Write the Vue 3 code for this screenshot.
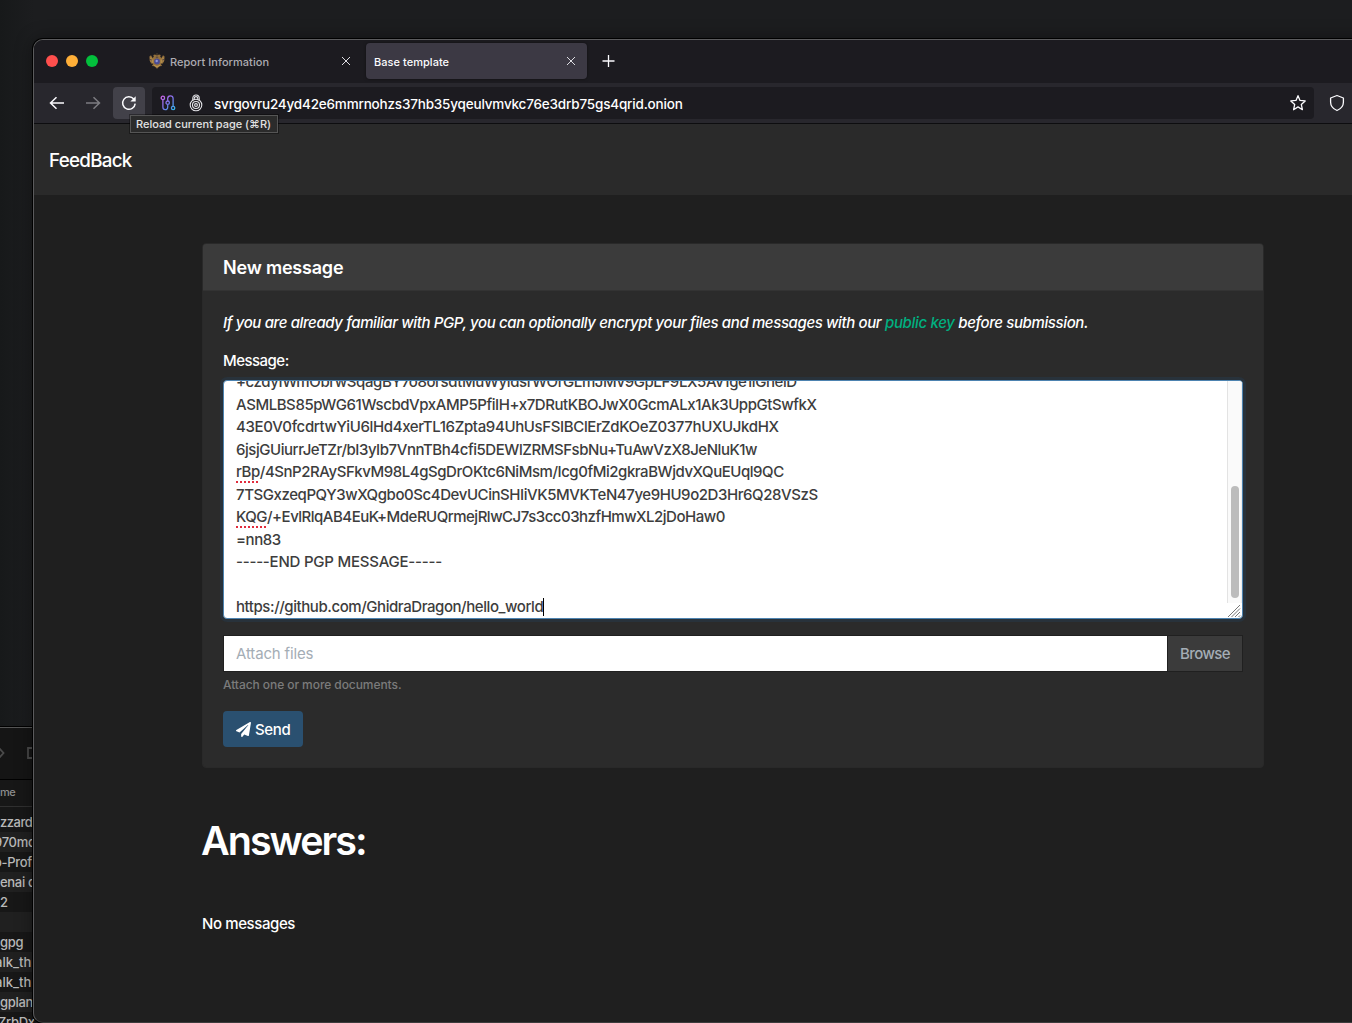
<script setup>
const keyLines = [
  { id: 'l0', text: '+czdyIWmObrwSqagBY7o8orsdtMuWyldsrWOrGLmJMv9GpLF9LX5Av1ge1lGhelD' },
  { id: 'l1', text: 'ASMLBS85pWG61WscbdVpxAMP5PfiIH+x7DRutKBOJwX0GcmALx1Ak3UppGtSwfkX' },
  { id: 'l2', text: '43E0V0fcdrtwYiU6lHd4xerTL16Zpta94UhUsFSIBClErZdKOeZ0377hUXUJkdHX' },
  { id: 'l3', text: '6jsjGUiurrJeTZr/bI3yIb7VnnTBh4cfi5DEWlZRMSFsbNu+TuAwVzX8JeNluK1w' },
  { id: 'l4', misspelt: 'rBp', text: '/4SnP2RAySFkvM98L4gSgDrOKtc6NiMsm/Icg0fMi2gkraBWjdvXQuEUql9QC' },
  { id: 'l5', text: '7TSGxzeqPQY3wXQgbo0Sc4DevUCinSHIiVK5MVKTeN47ye9HU9o2D3Hr6Q28VSzS' },
  { id: 'l6', misspelt: 'KQG', text: '/+EvlRlqAB4EuK+MdeRUQrmejRlwCJ7s3cc03hzfHmwXL2jDoHaw0' },
  { id: 'l7', text: '=nn83' },
  { id: 'l8', text: '-----END PGP MESSAGE-----' },
  { id: 'l9', text: '' },
  { id: 'l10', text: 'https://github.com/GhidraDragon/hello_world', caret: true },
]
const files = ['zzard', '970mo', 'o-Prof', 'enai c', '2', '', 'gpg', 'alk_th', 'alk_th', 'gplan', 'ZrbDx']
</script>

<template>
  <div class="desktop">
    <aside class="finder">
      <div class="finder-bar">
        <svg width="34" height="20" viewBox="0 0 34 20" fill="none" stroke="#4a4a4a" stroke-width="1.8"><path d="M-1 4l5.500 6-5.500 6M35 5h-6v10h6" /></svg>
      </div>
      <div class="finder-head">me</div>
      <ul class="finder-list">
        <li v-for="(name, i) in files" :key="i" :class="'f' + i">{{ name }}</li>
      </ul>
    </aside>

    <main class="window">
      <div class="tabs">
        <div class="lights"><i class="red"></i><i class="amber"></i><i class="green"></i></div>
        <div class="tab idle">
          <svg class="crest" width="16" height="16" viewBox="0 0 16 16">
            <path d="M8 2.500 7.500.500h1L8 2.500 6 1.500 4.300 2l.5 1.800L3.500 5 2 2.300.4 3.500l.3 4.300 1.500 2.700 2 .3L3 13l2.500.3L8 15.800l2.500-2.500L13 13l-1.200-2.200 2-.3 1.500-2.700.3-4.300L14 2.300 12.500 5l-1.300-1.200.5-1.800L10 1.500z" fill="#94713d" />
            <path d="M2 4.500v4M3.800 6.500v3.500M14 4.500v4M12.200 6.500v3.500M5 12.500l3 1 3-1" stroke="#c9a257" fill="none" stroke-width=".8" />
            <path d="M.8 6.500l2 .5M15.200 6.500l-2 .5M6.800 4.200h2.400" stroke="#3b3442" stroke-width=".8" />
            <circle cx="8" cy="8.500" r="2.900" fill="#4a4c94" /><circle cx="7.700" cy="8" r="1.200" fill="#8f95d6" />
          </svg>
          <span class="t-report">Report Information</span>
          <svg class="close" width="10" height="10" viewBox="0 0 10 10"><path d="M1 1l8 8M9 1L1 9" /></svg>
        </div>
        <div class="tab active">
          <span class="t-base">Base template</span>
          <svg class="close" width="10" height="10" viewBox="0 0 10 10"><path d="M1 1l8 8M9 1L1 9" /></svg>
        </div>
        <svg class="plus" width="14" height="14" viewBox="0 0 14 14"><path d="M6.500 1v12M.5 7h12" /></svg>
      </div>

      <div class="toolbar">
        <span class="tool"><svg width="16" height="16" viewBox="0 0 16 16"><path d="M15 8H1.500M7.500 2.200 1.500 8l6 5.800" /></svg></span>
        <span class="tool dim"><svg width="16" height="16" viewBox="0 0 16 16"><path d="M1 8h13.500M8.500 2.200l6 5.800-6 5.800" /></svg></span>
        <span class="tool reload">
          <svg width="16" height="16" viewBox="0 0 16 16"><path d="M14.200 8.700A6.300 6.300 0 1 1 12.800 4" /><path d="M14.700 1.200v5.300H9.400z" fill="#fbfbfe" stroke="none" /></svg>
          <span class="tooltip">Reload current page (⌘R)</span>
        </span>
        <div class="urlbar">
          <svg width="16" height="16" viewBox="0 0 16 16" fill="none" stroke-width="1.300">
            <defs><linearGradient id="circuit" x1="0" y1="0" x2="16" y2="16" gradientUnits="userSpaceOnUse"><stop offset="0" stop-color="#e063e8" /><stop offset=".5" stop-color="#7972e8" /><stop offset="1" stop-color="#20c5ec" /></linearGradient></defs>
            <g stroke="url(#circuit)"><circle cx="2.900" cy="2.900" r="1.700" /><path d="M2.900 4.600v7.700a2.400 2.400 0 0 0 4.800 0V9.500M7.700 6V3.600a2.700 2.700 0 0 1 5.400 0v7.700" /><circle cx="7.700" cy="7.700" r="1.700" /><circle cx="13.100" cy="13" r="1.700" /></g>
          </svg>
          <svg class="onion" width="16" height="18" viewBox="0 0 16 18" fill="none" stroke="#e4e4e8" stroke-width="1.100">
            <path d="M4.800 6.500V4.200a3.200 3.200 0 0 1 6.400 0v2.300" /><circle cx="8" cy="11" r="5.800" /><circle cx="8" cy="11" r="3.500" /><circle cx="8" cy="11" r="1.400" /><path d="M6.200 5.500V4.400a1.800 1.800 0 0 1 3.600 0v1.100" />
          </svg>
          <span class="address">svrgovru24yd42e6mmrnohzs37hb35yqeulvmvkc76e3drb75gs4qrid.onion</span>
          <svg class="star" width="18" height="18" viewBox="0 0 18 18"><path d="M9 1.700l2 4.700 5.200.5-3.900 3.500 1.100 5.300L9 12.900l-4.400 2.800 1.100-5.300L1.800 6.900 7 6.400z" /></svg>
        </div>
        <svg class="shield" width="16" height="18" viewBox="0 0 16 18"><path d="M8 1.500 14.400 4v4.200c0 3.500-2.500 6.500-6.400 8.300C4.100 14.700 1.600 11.700 1.600 8.200V4z" /></svg>
      </div>

      <header class="site-head"><span>FeedBack</span></header>

      <section class="content">
        <div class="card">
          <h2 class="card-head"><span>New message</span></h2>
          <form class="card-body" @submit.prevent>
            <p class="intro">If you are already familiar with PGP, you can optionally encrypt your files and messages with our <a>public key</a> before submission.</p>
            <label class="label">Message:</label>
            <div class="message">
              <div class="lines">
                <div v-for="line in keyLines" :key="line.id" class="line" :class="line.id"><span v-if="line.misspelt" class="misspelt">{{ line.misspelt }}</span>{{ line.text }}<i v-if="line.caret" class="caret"></i></div>
              </div>
              <div class="scroll">
                <div class="track"><div class="thumb"></div></div>
                <svg width="14" height="15" viewBox="0 0 14 15"><path d="M1 14 13 2M4.500 14l8.500-8.500M8 14l5-5M11.500 14l1.500-1.500" stroke="#777" fill="none" /></svg>
              </div>
            </div>
            <div class="file"><span class="file-name">Attach files</span><span class="browse">Browse</span></div>
            <small class="help">Attach one or more documents.</small>
            <button class="send">
              <svg width="15" height="15" viewBox="0 0 512 512"><path fill="#fff" d="M476 3.200 12.500 270.600c-18.100 10.400-15.800 35.600 2.200 43.200L121 358.400l287.300-253.200c5.500-4.900 13.300 2.600 8.600 8.300L176 407v80.500c0 23.600 28.500 32.900 42.500 15.800L282 426l124.600 52.200c14.200 6 30.400-2.900 33-18.200l72-432C515 7.800 493.300-6.800 476 3.200z" /></svg>
              <span>Send</span>
            </button>
          </form>
        </div>
        <h1>Answers:</h1>
        <p class="none">No messages</p>
      </section>
    </main>
  </div>
</template>

<style>
body { margin: 0; overflow: hidden; background: #1c1d1f; }
</style>

<style scoped>
* { box-sizing: border-box; }
h1, h2, p, ul { margin: 0; padding: 0; }
.desktop { position: relative; width: 1352px; height: 1023px; overflow: hidden; background: linear-gradient(90deg, #17191a, #1c1d1f 34px); font-family: Inter, "Liberation Sans", sans-serif; color: #fff; }
svg { flex: none; display: block; }

.finder { position: absolute; left: 0; top: 726px; width: 36px; height: 297px; overflow: hidden; border-top: 1px solid #000; background: #171717; color: #b9b9b9; }
.finder-bar { height: 53px; border-top: 1px solid #555; border-bottom: 1px solid #000; padding-top: 15px; background: #151515; }
.finder-bar svg { margin-left: -1px; }
.finder-head { height: 27px; border-bottom: 1px solid #303030; font-size: 11px; font-weight: 500; line-height: 25px; letter-spacing: -.4px; color: #8d8d8d; }
.finder-list { list-style: none; padding-top: 5px; }
.finder-list li { height: 20px; line-height: 20px; font-size: 13px; font-weight: 500; white-space: nowrap; letter-spacing: -.3px; }
.finder-list li:nth-child(even) { background: #202020; }
.finder-list .f0 { letter-spacing: -.5px; }
.finder-list .f1, .finder-list .f2 { text-indent: -6px; }
.finder-list .f7, .finder-list .f8 { text-indent: -5px; letter-spacing: 0; }
.finder-list .f10 { text-indent: -2px; }

.window { position: absolute; left: 33px; top: 39px; width: 1340px; height: 984px; border: 1px solid #5b5b5d; border-bottom-color: #3c3c3c; border-radius: 10px; overflow: hidden; background: #1f1f1f; box-shadow: 0 0 0 1px #000, 0 0 18px rgba(0, 0, 0, .4); }
.tabs { height: 43px; display: flex; align-items: center; background: #1c1b20; padding: 0 0 1px 12px; }
.lights { display: flex; gap: 8px; width: 95px; }
.lights i { width: 12px; height: 12px; border-radius: 50%; }
.red { background: #ff4f4d; } .amber { background: #ffaf38; } .green { background: #03c03c; }
.tab { display: flex; align-items: center; height: 36px; width: 221px; padding: 0 11px 0 8px; border-radius: 4px; font-size: 11px; font-weight: 500; line-height: 16px; }
.tab span { padding-top: 2px; white-space: nowrap; letter-spacing: .04px; }
.tab.idle { width: 225px; color: #adacb2; }
.crest { margin-right: 5px; }
.tab.active { background: #3c3944; color: #fbfbfe; box-shadow: 0 0 3px rgba(0, 0, 0, .5); }
.close { margin-left: auto; fill: none; stroke: #dddde2; stroke-width: 1; }
.idle .close { margin-right: 4px; }
.plus { margin-left: 15px; fill: none; stroke: #fbfbfe; stroke-width: 1.300; }
.toolbar { height: 41px; display: flex; align-items: center; background: #28272d; border-bottom: 1px solid #0d0d0f; padding-left: 7px; }
.tool { position: relative; width: 32px; height: 32px; display: flex; align-items: center; justify-content: center; border-radius: 4px; margin-right: 4px; }
.tool svg { fill: none; stroke: #fbfbfe; stroke-width: 1.500; }
.tool.dim svg { opacity: .4; }
.tool.reload { background: #424149; margin-right: 7px; }
.tooltip { position: absolute; z-index: 3; left: 17px; top: 28px; width: 148px; height: 18px; border: 1px solid #555; background: #2b2b2b; box-shadow: 0 0 0 1px rgba(0, 0, 0, .35); color: #e2e2e2; font: 500 11px/17px Inter, "DejaVu Sans", sans-serif; padding-left: 5px; white-space: nowrap; letter-spacing: -.02px; }
.urlbar { width: 1162px; height: 32px; border-radius: 4px; background: #1c1b20; display: flex; align-items: center; padding: 0 7px 0 8px; }
.onion { margin-left: 12px; }
.address { margin-left: 10px; font-size: 13.500px; font-weight: 500; line-height: 18px; padding-top: 1px; white-space: nowrap; letter-spacing: -.185px; }
.star { margin-left: auto; }
.star, .shield { fill: none; stroke: #fbfbfe; stroke-width: 1.300; stroke-linejoin: round; }
.shield { margin-left: 15px; }
.site-head { height: 71px; background: #2a2a2a; padding: 25px 15px 0; font-size: 18.750px; font-weight: 500; line-height: 24px; letter-spacing: -.7px; }

.content { padding: 48px 0 0 168px; font-size: 15px; font-weight: 500; line-height: 22.500px; }
.card { width: 1062px; height: 525px; border: 1px solid #292929; border-radius: 4px; background: #2b2b2b; }
.card-head { height: 47px; background: #3b3b3b; border-bottom: 1px solid #333; border-radius: 3px 3px 0 0; padding: 0 20px; font-size: 18px; font-weight: 600; line-height: 47px; letter-spacing: -.2px; }
.card-body { display: flex; flex-direction: column; align-items: flex-start; padding: 21px 20px 0; }
.intro { font-style: italic; white-space: nowrap; letter-spacing: -.38px; }
.intro a { color: #00b080; letter-spacing: -.32px; }
.label { margin-top: 15px; letter-spacing: -.52px; }
.message { width: 1020px; height: 239px; margin-top: 8px; display: flex; overflow: hidden; border: 1px solid #4d83b0; border-radius: 4px; background: #fff; color: #3d3d3d; box-shadow: 0 0 0 3px #28323b; }
.lines { flex: 1; padding-left: 12px; margin-top: -10px; white-space: nowrap; }
.line { height: 22.500px; letter-spacing: -.43px; }
.l0 { letter-spacing: -.41px; }
.l2 { letter-spacing: -.36px; }
.l3 { letter-spacing: -.45px; }
.l4 { letter-spacing: -.45px; }
.l6 { letter-spacing: -.5px; }
.l8 { letter-spacing: -.22px; }
.misspelt { text-decoration: underline dotted #e22c3c 2px; text-underline-offset: 4px; text-decoration-skip-ink: none; }
.caret { display: inline-block; width: 1px; height: 18px; background: #000; vertical-align: -4px; }
.scroll { width: 15px; display: flex; flex-direction: column; }
.track { height: 223px; border-left: 1px solid #e3e3e3; border-right: 1px solid #eee; background: #fafafa; padding: 105px 0 0 3px; }
.thumb { width: 8px; height: 112px; border-radius: 4px; background: #bcbcbc; }
.file { width: 1020px; height: 37px; margin-top: 16px; display: flex; border: 1px solid #202020; background: #fff; line-height: 36px; color: #a4adb5; font-weight: 400; }
.file-name { flex: 1; padding-left: 12px; letter-spacing: -.15px; }
.browse { width: 75px; border-left: 1px solid #202020; background: #3b3b3b; padding-left: 12px; color: #a4adb5; font-weight: 500; letter-spacing: -.6px; }
.help { margin-top: 4px; font-size: 12px; font-weight: 500; line-height: 18px; letter-spacing: -.07px; color: #7b7b7b; }
.send { margin-top: 17px; width: 80px; height: 36px; border: 0; border-radius: 4px; background: #2a5070; color: #fff; display: flex; align-items: center; gap: 4px; padding: 1px 13px 0; font: 500 15px/36px Inter, sans-serif; letter-spacing: -.35px; }
h1 { margin: 49px 0 0 -1px; font-size: 39.500px; font-weight: 560; line-height: 48px; letter-spacing: -2px; }
.none { margin-top: 48px; letter-spacing: -.4px; }
</style>
